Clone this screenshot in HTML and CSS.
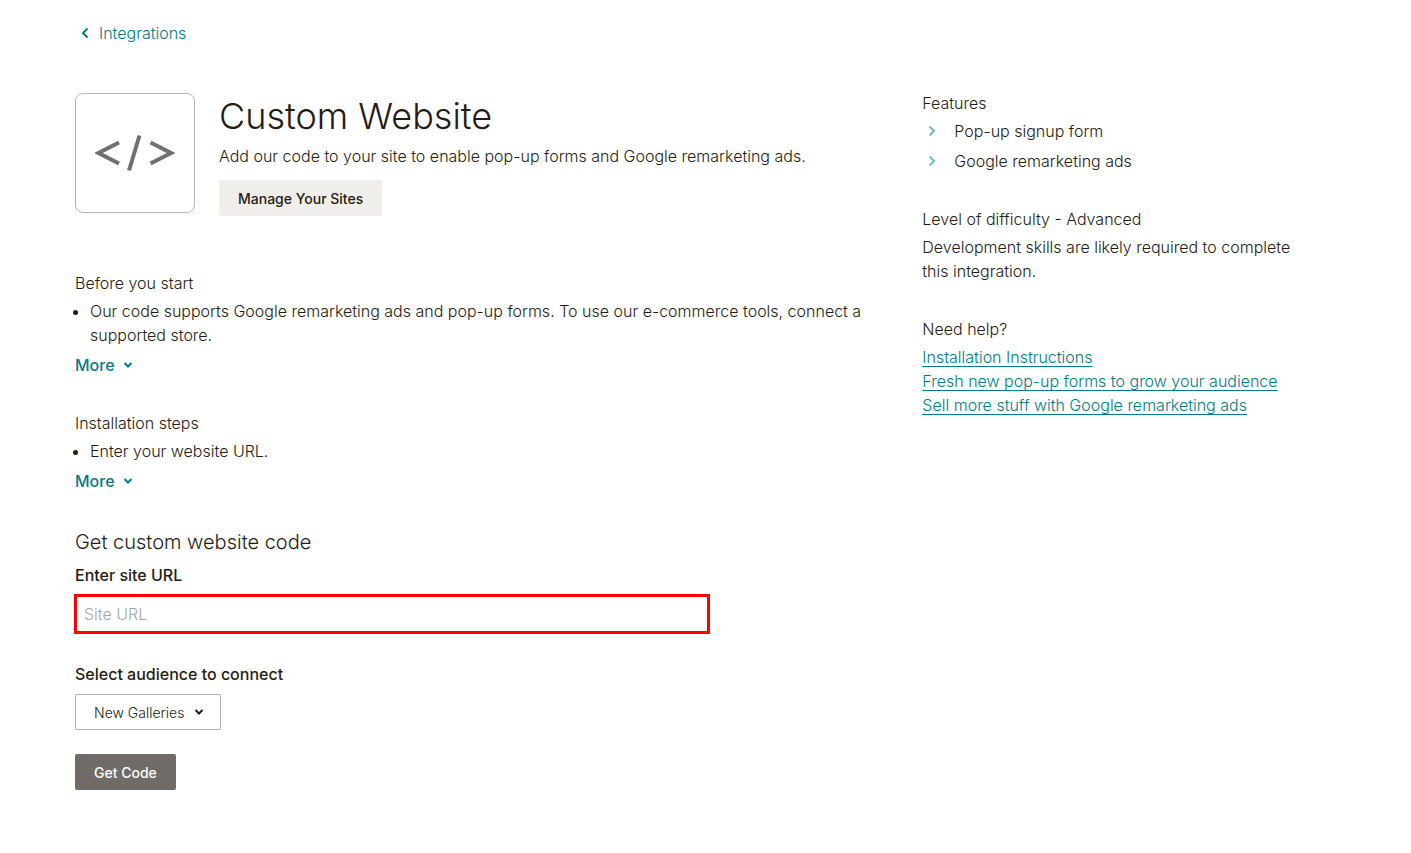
FILE: index.html
```html
<!DOCTYPE html>
<html lang="en">
<head>
  <meta charset="UTF-8">
  <meta name="viewport" content="width=device-width, initial-scale=1.0">
  <title>Custom Website</title>
  <link rel="stylesheet" href="styles.css">
</head>
<body>
  <div class="page">
    <nav>
      <a class="back-link" href="#">
        <svg width="8" height="12" viewBox="0 0 8 12"><path d="M6.500 1.500L2 6l4.500 4.500" /></svg>
        Integrations
      </a>
    </nav>

    <div class="layout">
      <main>
        <header class="intro">
          <div class="logo">
            <svg width="80" height="38" viewBox="0 0 80 38">
              <path d="M24 8.500L3.500 19l20.500 10.500M55.500 8.500L76 19l-20.500 10.500" />
              <path d="M44.500 1.500L34 36.500" />
            </svg>
          </div>
          <div class="intro-text">
            <h1>Custom Website</h1>
            <p>Add our code to your site to enable pop-up forms and Google remarketing ads.</p>
            <button type="button" class="btn btn-light">Manage Your Sites</button>
          </div>
        </header>

        <section class="block">
          <h3>Before you start</h3>
          <ul class="steps">
            <li>Our code supports Google remarketing ads and pop-up forms. To use our e-commerce tools, connect a supported store.</li>
          </ul>
          <button type="button" class="more">
            More
            <svg width="10" height="8" viewBox="0 0 10 8"><path d="M1.500 2L5 5.500 8.500 2" /></svg>
          </button>
        </section>

        <section class="block">
          <h3>Installation steps</h3>
          <ul class="steps">
            <li>Enter your website URL.</li>
          </ul>
          <button type="button" class="more">
            More
            <svg width="10" height="8" viewBox="0 0 10 8"><path d="M1.500 2L5 5.500 8.500 2" /></svg>
          </button>
        </section>

        <form class="code-form">
          <h2>Get custom website code</h2>
          <label for="site_url">Enter site URL</label>
          <input type="text" id="site_url" placeholder="Site URL">
          <label for="audience">Select audience to connect</label>
          <div class="select">
            <select id="audience">
              <option>New Galleries</option>
            </select>
            <svg width="10" height="8" viewBox="0 0 10 8"><path d="M1.500 2L5 5.500 8.500 2" /></svg>
          </div>
          <button type="button" class="btn btn-dark">Get Code</button>
        </form>
      </main>

      <aside>
        <section class="block">
          <h3>Features</h3>
          <ul class="features">
            <li>
              <svg width="8" height="12" viewBox="0 0 8 12"><path d="M1.500 1.500L6 6l-4.500 4.500" /></svg>
              Pop-up signup form
            </li>
            <li>
              <svg width="8" height="12" viewBox="0 0 8 12"><path d="M1.500 1.500L6 6l-4.500 4.500" /></svg>
              Google remarketing ads
            </li>
          </ul>
        </section>

        <section class="block">
          <h3>Level of difficulty - Advanced</h3>
          <p>Development skills are likely required to complete this integration.</p>
        </section>

        <section class="block">
          <h3>Need help?</h3>
          <ul class="links">
            <li><a href="#">Installation Instructions</a></li>
            <li><a href="#">Fresh new pop-up forms to grow your audience</a></li>
            <li><a href="#">Sell more stuff with Google remarketing ads</a></li>
          </ul>
        </section>
      </aside>
    </div>
  </div>
</body>
</html>
```
FILE: styles.css
```css
* {
  margin: 0;
  padding: 0;
  box-sizing: border-box;
}

body {
  font-family: Inter, "Liberation Sans", sans-serif;
  font-size: 16px;
  font-weight: 300;
  line-height: 24px;
  color: #241c15;
  background-color: #fff;
}

ul {
  list-style: none;
}

svg {
  flex: none;
  fill: none;
  stroke: currentColor;
  stroke-width: 2;
}

.page {
  padding: 21px 75px 60px;
}

.back-link {
  display: inline-flex;
  align-items: center;
  gap: 10px;
  padding-left: 6px;
  color: #007c89;
  text-decoration: none;
}

.layout {
  display: grid;
  grid-template-columns: 2fr 1fr;
  gap: 20px;
  margin-top: 46px;
}

.intro {
  display: flex;
  gap: 24px;
  padding-top: 2px;
  margin-bottom: 55px;
}

.logo {
  display: flex;
  flex: none;
  align-items: center;
  justify-content: center;
  width: 120px;
  height: 120px;
  border: 1px solid #b5b5b5;
  border-radius: 8px;
  color: #707070;
}

.logo svg {
  stroke-width: 4;
}

h1 {
  margin-bottom: 4px;
  font-size: 36px;
  font-weight: 300;
  line-height: 47px;
}

h2 {
  margin-bottom: 6px;
  font-size: 20px;
  font-weight: 300;
  line-height: 30px;
}

h3 {
  margin-bottom: 4px;
  font-size: 16px;
  font-weight: 300;
}

.btn {
  height: 36px;
  padding: 0 19px;
  border: none;
  border-radius: 2px;
  font-family: inherit;
  font-size: 14px;
  font-weight: 500;
  cursor: pointer;
}

.btn-light {
  margin-top: 12px;
  background-color: #efeeea;
  color: #241c15;
}

.btn-dark {
  background-color: #716b67;
  color: #fff;
}

.block {
  margin-bottom: 34px;
}

.steps {
  padding-left: 15px;
  margin-bottom: 6px;
  list-style: disc;
}

.more {
  display: flex;
  align-items: center;
  gap: 8px;
  border: none;
  background: none;
  font-family: inherit;
  font-size: 16px;
  font-weight: 500;
  line-height: 24px;
  color: #007c89;
  cursor: pointer;
}

.code-form label {
  display: block;
  margin-bottom: 8px;
  font-weight: 500;
}

.code-form input {
  display: block;
  width: 100%;
  max-width: 634px;
  height: 38px;
  padding: 0 7px;
  margin-bottom: 29px;
  border: 2px solid #f00;
  outline: 1px solid #f00;
  font-family: inherit;
  font-size: 16px;
  font-weight: 300;
}

.code-form input::placeholder {
  color: #a5a5a5;
}

.select {
  position: relative;
  width: 146px;
  margin-bottom: 24px;
}

.select select {
  display: block;
  width: 100%;
  height: 36px;
  padding: 0 18px;
  border: 1px solid #b5b5b5;
  border-radius: 2px;
  appearance: none;
  background-color: #fff;
  font-family: inherit;
  font-size: 14px;
  font-weight: 300;
  color: #241c15;
}

/* arrow sits over the select */
.select svg {
  position: absolute;
  top: 14px;
  right: 17px;
  pointer-events: none;
}

aside .block {
  padding-right: 30px;
}

.features li {
  display: flex;
  align-items: center;
  gap: 18px;
  padding-left: 6px;
  margin-bottom: 6px;
}

.features svg {
  color: #6dbfb0;
}

.links a {
  color: #007c89;
  text-underline-offset: 3px;
  text-decoration-thickness: 1px;
  text-decoration-skip-ink: none;
}
```
